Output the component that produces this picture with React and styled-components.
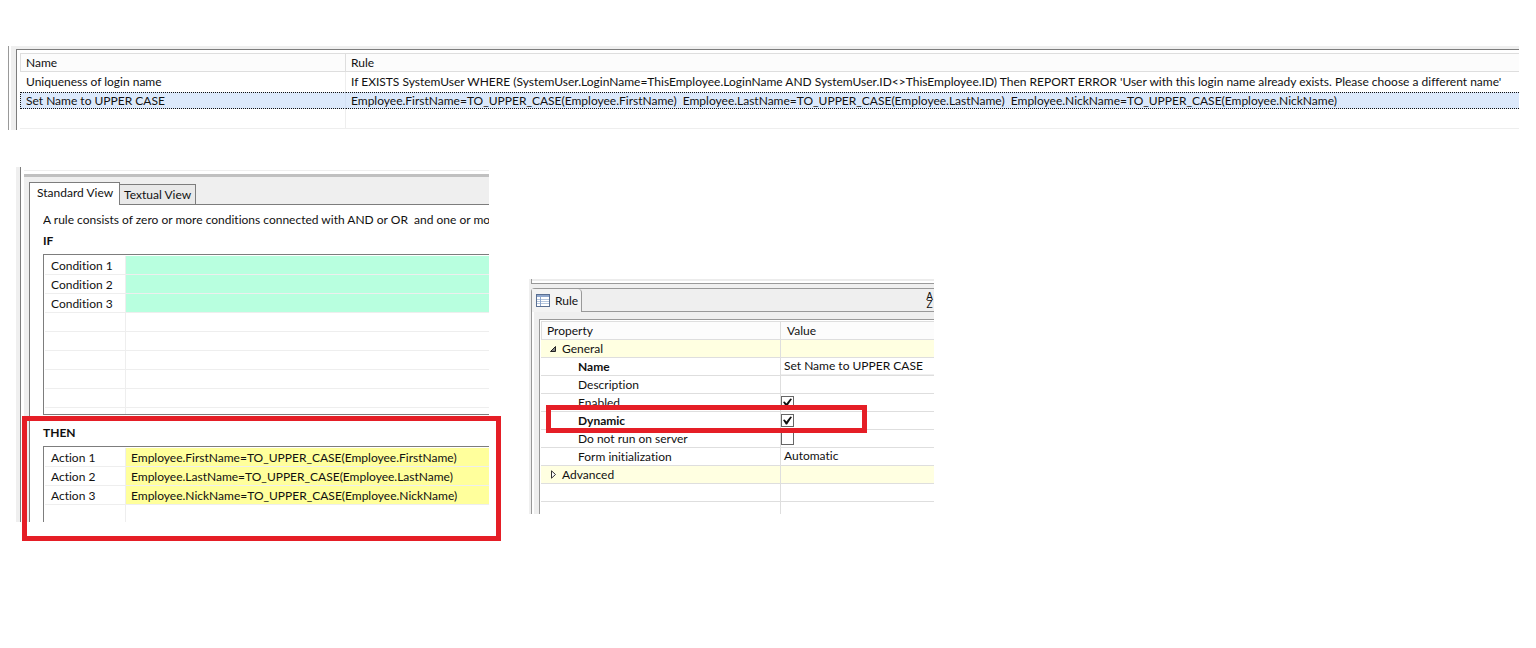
import React, { useState } from 'react';
import styled, { createGlobalStyle } from 'styled-components';

const GlobalStyle = createGlobalStyle`
  * {
    box-sizing: border-box;
  }

  body {
    margin: 0;
    background: #fff;
    color: #111;
    font: 12px/18px Lato, "Open Sans", sans-serif;
    font-variant-ligatures: none;
  }

  button,
  input {
    font: inherit;
    font-variant-ligatures: none;
    color: inherit;
  }
`;

const Page = styled.main`
  min-height: 100vh;
  padding-top: 46px;
`;

const RulesPanel = styled.section`
  margin: 0 17px 0 8px;
  padding-left: 2px;
  border-left: 1px solid #999;
`;

const RulesFrame = styled.div`
  padding: 3px 0 0 5px;
  background: #efefef;
`;

const RulesBody = styled.div`
  padding: 3px 0 1px 3px;
  border-top: 1px solid #7d7d7d;
  border-left: 1px solid #7d7d7d;
  background: #fff;
`;

const Table = styled.table`
  width: 100%;
  table-layout: fixed;
  border-collapse: separate;
  border-spacing: 0;
  text-align: left;

  th,
  td {
    padding: 0;
    overflow: hidden;
    white-space: pre;
    font-weight: 400;
  }
`;

const Col = styled.col`
  width: ${props => props.$width}px;
`;

const RulesTable = styled(Table)`
  thead th {
    height: 19px;
    padding-left: 5px;
    border: 1px solid #dedede;
    border-left-width: 0;
    border-right-width: 1px;
    background: #fcfcfc;
    line-height: 17px;
  }

  thead th:first-child {
    border-left-width: 1px;
  }

  thead th:last-child {
    border-right: 0;
  }
`;

const RuleRow = styled.tr`
  td {
    height: ${props => (props.$selected ? 17 : 20)}px;
    padding-left: 5px;
    line-height: ${props => (props.$selected ? 15 : 18)}px;
    border: 0 solid #eee;
    border-bottom-width: ${props => (props.$empty ? 1 : 0)}px;
    ${props => props.$selected && `
      background: #dce9fb;
      border-top: 1px dotted #111;
      border-bottom: 1px dotted #111;
    `}
  }

  td:first-child {
    padding-left: 6px;
    border-right: 1px solid ${props => (props.$selected ? '#d3e0f3' : '#eee')};
    ${props => props.$selected && `
      padding-left: 5px;
      border-left: 1px dotted #111;
    `}
  }
`;

const Details = styled.div`
  display: grid;
  grid-template-columns: 473fr 405fr 562fr;
  gap: 40px;
  align-items: start;
  margin-top: 37px;
  padding-left: 16px;
`;

const EditorPanel = styled.section`
  min-width: 0;
  padding-left: 4px;
  background: #efefef;
`;

const EditorFrame = styled.div`
  padding-left: 3px;
  border-left: 1px solid #7d7d7d;
  background: #fff;
`;

const Splitter = styled.div`
  height: 10px;
  padding-top: 3px;
  border-bottom: 3px solid #c0c0c0;

  &::before {
    content: "";
    display: block;
    border-top: 1px solid #eee;
  }
`;

const TabFolder = styled.div`
  padding: 5px 0 0 5px;
  background: #efefef;
`;

const TabList = styled.div`
  display: flex;
  align-items: flex-end;
`;

const Tab = styled.button`
  height: ${props => (props.$active ? 23 : 21)}px;
  padding: ${props => (props.$active ? '0 6px 2px 7px' : '0 4px')};
  border: 1px solid #7d7d7d;
  border-width: ${props => (props.$active ? '1px 1px 0 1px' : '1px 1px 1px 0')};
  background: ${props => (props.$active ? '#fff' : '#e9e9e9')};
  line-height: 18px;
  white-space: nowrap;
`;

const TabRest = styled.div`
  flex: 1;
  height: 1px;
  background: #7d7d7d;
`;

const TabPage = styled.div`
  border-left: 1px solid #7d7d7d;
  background: #fff;
`;

const Conditions = styled.section`
  padding: 6px 0 0 13px;
`;

const Intro = styled.p`
  margin: 0 0 3px;
  overflow: hidden;
  white-space: pre;
`;

const Heading = styled.h2`
  margin: 0;
  font-size: 12px;
  line-height: 18px;
`;

const ClauseBox = styled.div`
  margin-top: 4px;
  padding: 1px 0 0 1px;
  border: 1px solid #7d7d7d;
  border-right: 0;
  border-bottom-width: ${props => (props.$open ? 0 : 1)}px;
`;

const ClauseTable = styled(Table)`
  th,
  td {
    height: 19px;
    padding: 2px 0 0 5px;
    border-bottom: 1px solid #eee;
    line-height: 16px;
  }

  th {
    padding-left: 6px;
    border-right: 1px solid #eee;
  }

  tr:last-child th,
  tr:last-child td {
    height: ${props => props.$tail}px;
    border-bottom: 0;
  }
`;

const ClauseCell = styled.td`
  background: ${props => props.$fill};
`;

const Actions = styled.section`
  position: relative;
  padding: 9px 0 0 13px;
`;

const Highlight = styled.span`
  position: absolute;
  inset: ${props => props.$inset};
  z-index: 1;
  border: 5px solid #e51e26;
  pointer-events: none;
`;

const PropertiesPanel = styled.section`
  min-width: 0;
  margin-top: 112px;
  padding-left: 2px;
  background: #efefef;
`;

const PropertiesTop = styled.div`
  height: 5px;
  margin-bottom: 4px;
  border-left: 1px solid #999;
  border-bottom: 1px solid #999;
  background: linear-gradient(#ececec 2px, #fff 2px);
`;

const PropertiesBar = styled.div`
  display: flex;
  height: 24px;
  border: 1px solid #999;
  border-width: 1px 0 0 1px;
  border-top-left-radius: 4px;
`;

const PropertiesTab = styled.button`
  display: flex;
  align-items: center;
  gap: 5px;
  padding: 0 3px 0 4px;
  border: 0;
  border-right: 1px solid #999;
  border-top-right-radius: 4px;
  background: #f3f3f3;
`;

const PropertiesTools = styled.div`
  display: flex;
  flex: 1;
  justify-content: flex-end;
  min-width: 0;
  border-bottom: 1px solid #999;
`;

const SortButton = styled.button`
  display: flex;
  flex-direction: column;
  align-items: center;
  width: 9px;
  padding: 4px 0 0;
  border: 0;
  background: none;
  color: #111;
  font: 10px/8px "Liberation Sans", sans-serif;
`;

const PropertiesBody = styled.div`
  padding: 7px 0 0 5px;
  border-left: 1px solid #999;
  box-shadow: inset 2px 0 #fff;
`;

const Grid = styled.div`
  padding: 1px 0 0 1px;
  margin-left: 2px;
  border: 1px solid #999;
  border-width: 1px 0 0 1px;
  background: #fff;
`;

const PropertyTable = styled(Table)`
  thead th {
    height: 19px;
    padding-left: 6px;
    border: 1px solid #dedede;
    border-left-width: 0;
    border-right-width: 1px;
    background: #fcfcfc;
    line-height: 17px;
  }

  thead th:first-child {
    padding-left: 5px;
    border-left-width: 1px;
  }

  thead th:last-child {
    border-right: 0;
  }
`;

const PropertyRow = styled.tr`
  position: relative;
  background: ${props => (props.$group ? '#ffffe1' : '#fff')};

  th,
  td {
    height: 18px;
    border-bottom: 1px solid #dedede;
    line-height: 17px;
  }

  th {
    padding-left: ${props => (props.$group ? 8 : 37)}px;
    border-right: 1px solid #dedede;
    font-weight: ${props => (props.$bold ? 700 : 400)};
  }
`;

const TailRow = styled(PropertyRow)`
  th,
  td {
    height: 12px;
    border-bottom: 0;
  }
`;

const GroupToggle = styled.button`
  display: flex;
  align-items: center;
  gap: 5px;
  height: 17px;
  padding: 0;
  border: 0;
  background: none;
`;

const ValueText = styled.span`
  display: block;
  height: 17px;
  padding-left: 3px;
  line-height: 16px;
`;

const ValueInput = styled.input`
  display: block;
  width: 100%;
  height: 17px;
  padding: 0 0 2px 3px;
  border: 0;
  border-bottom: 1px solid #efefef;
  outline: 0;
  background: #fff;
`;

const CheckBox = styled.input`
  appearance: none;
  display: block;
  width: 13px;
  height: 13px;
  margin: 0;
  border: 1px solid #666;
  background: #fff;

  &:checked::before {
    content: "";
    display: block;
    width: 9px;
    height: 9px;
    margin: 1px;
    background: #111;
    clip-path: polygon(0 45%, 18% 38%, 38% 62%, 82% 5%, 100% 12%, 45% 95%, 32% 95%);
  }
`;

const rules = [
  {
    name: 'Uniqueness of login name',
    rule: "If EXISTS SystemUser WHERE (SystemUser.LoginName=ThisEmployee.LoginName AND SystemUser.ID<>ThisEmployee.ID) Then REPORT ERROR 'User with this login name already exists. Please choose a different name'",
  },
  {
    name: 'Set Name to UPPER CASE',
    rule: 'Employee.FirstName=TO_UPPER_CASE(Employee.FirstName)  Employee.LastName=TO_UPPER_CASE(Employee.LastName)  Employee.NickName=TO_UPPER_CASE(Employee.NickName)',
    selected: true,
  },
];

const conditions = [
  { label: 'Condition 1', fill: '#b8ffdf' },
  { label: 'Condition 2', fill: '#b8ffdf' },
  { label: 'Condition 3', fill: '#b8ffdf' },
  {}, {}, {}, {}, {}, {},
];

const actions = [
  { label: 'Action 1', text: 'Employee.FirstName=TO_UPPER_CASE(Employee.FirstName)', fill: '#ffff9c' },
  { label: 'Action 2', text: 'Employee.LastName=TO_UPPER_CASE(Employee.LastName)', fill: '#ffff9c' },
  { label: 'Action 3', text: 'Employee.NickName=TO_UPPER_CASE(Employee.NickName)', fill: '#ffff9c' },
  {},
];

const TableIcon = () => (
  <svg width="14" height="13" viewBox="0 0 14 13" shapeRendering="crispEdges" aria-hidden="true">
    <rect width="14" height="13" fill="#5a6f92" />
    <rect x="1" y="1" width="12" height="2" fill="#8ea6cc" />
    <rect x="1" y="3" width="12" height="9" fill="#fff" />
    <path d="M1 5.5h12M1 7.5h12M1 9.5h12" stroke="#b5c6de" />
    <path d="M4.5 3v9" stroke="#8ea6cc" />
  </svg>
);

const Arrow = ({ open }) => (
  <svg width="8" height="9" viewBox="0 0 8 9" aria-hidden="true">
    {open
      ? <path d="M6.5 2.5v5h-5z" fill="#888" stroke="#222" />
      : <path d="M2.5 .8v7.4l4-3.7z" fill="#fff" stroke="#333" />}
  </svg>
);

const Rules = () => (
  <RulesPanel>
    <RulesFrame>
      <RulesBody>
        <RulesTable>
          <colgroup>
            <Col $width={326} />
            <col />
          </colgroup>
          <thead>
            <tr>
              <th>Name</th>
              <th>Rule</th>
            </tr>
          </thead>
          <tbody>
            {rules.map(({ name, rule, selected }) => (
              <RuleRow key={name} $selected={selected}>
                <td>{name}</td>
                <td>{rule}</td>
              </RuleRow>
            ))}
            <RuleRow $empty>
              <td />
              <td />
            </RuleRow>
          </tbody>
        </RulesTable>
      </RulesBody>
    </RulesFrame>
  </RulesPanel>
);

const Clauses = ({ rows, tail }) => (
  <ClauseTable $tail={tail}>
    <colgroup>
      <Col $width={81} />
      <col />
    </colgroup>
    <tbody>
      {rows.map(({ label, text, fill }, index) => (
        <tr key={index}>
          <th scope="row">{label}</th>
          <ClauseCell $fill={fill}>{text}</ClauseCell>
        </tr>
      ))}
    </tbody>
  </ClauseTable>
);

const RuleEditor = () => (
  <EditorPanel>
    <EditorFrame>
      <Splitter />
      <TabFolder>
        <TabList role="tablist">
          <Tab role="tab" aria-selected="true" $active>Standard View</Tab>
          <Tab role="tab" aria-selected="false">Textual View</Tab>
          <TabRest />
        </TabList>
        <TabPage>
          <Conditions>
            <Intro>A rule consists of zero or more conditions connected with AND or OR  and one or mo</Intro>
            <Heading>IF</Heading>
            <ClauseBox>
              <Clauses rows={conditions} tail={6} />
            </ClauseBox>
          </Conditions>
          <Actions>
            <Heading>THEN</Heading>
            <ClauseBox $open>
              <Clauses rows={actions} tail={17} />
            </ClauseBox>
            <Highlight $inset="1px -12px -19px -8px" />
          </Actions>
        </TabPage>
      </TabFolder>
    </EditorFrame>
  </EditorPanel>
);

const Properties = () => {
  const [name, setName] = useState('Set Name to UPPER CASE');
  const [flags, setFlags] = useState({ enabled: true, dynamic: true, server: false });

  const renderFlag = (id) => (
    <CheckBox
      id={id}
      type="checkbox"
      checked={flags[id]}
      onChange={() => setFlags({ ...flags, [id]: !flags[id] })}
    />
  );

  return (
    <PropertiesPanel>
      <PropertiesTop />
      <PropertiesBar>
        <PropertiesTab>
          <TableIcon />
          Rule
        </PropertiesTab>
        <PropertiesTools>
          <SortButton aria-label="Sort">
            <span>A</span>
            <span>Z</span>
          </SortButton>
        </PropertiesTools>
      </PropertiesBar>
      <PropertiesBody>
        <Grid>
          <PropertyTable>
            <colgroup>
              <Col $width={240} />
              <col />
            </colgroup>
            <thead>
              <tr>
                <th>Property</th>
                <th>Value</th>
              </tr>
            </thead>
            <tbody>
              <PropertyRow $group>
                <th><GroupToggle><Arrow open />General</GroupToggle></th>
                <td />
              </PropertyRow>
              <PropertyRow $bold>
                <th><label htmlFor="name">Name</label></th>
                <td>
                  <ValueInput id="name" value={name} onChange={(event) => setName(event.target.value)} />
                </td>
              </PropertyRow>
              <PropertyRow>
                <th>Description</th>
                <td />
              </PropertyRow>
              <PropertyRow>
                <th><label htmlFor="enabled">Enabled</label></th>
                <td>{renderFlag('enabled')}</td>
              </PropertyRow>
              <PropertyRow $bold>
                <th>
                  <label htmlFor="dynamic">Dynamic</label>
                  <Highlight $inset="-7px 67px -3px 5px" />
                </th>
                <td>{renderFlag('dynamic')}</td>
              </PropertyRow>
              <PropertyRow>
                <th><label htmlFor="server">Do not run on server</label></th>
                <td>{renderFlag('server')}</td>
              </PropertyRow>
              <PropertyRow>
                <th>Form initialization</th>
                <td><ValueText>Automatic</ValueText></td>
              </PropertyRow>
              <PropertyRow $group>
                <th><GroupToggle><Arrow />Advanced</GroupToggle></th>
                <td />
              </PropertyRow>
              <PropertyRow>
                <th />
                <td />
              </PropertyRow>
              <TailRow>
                <th />
                <td />
              </TailRow>
            </tbody>
          </PropertyTable>
        </Grid>
      </PropertiesBody>
    </PropertiesPanel>
  );
};

const App = () => (
  <Page>
    <GlobalStyle />
    <Rules />
    <Details>
      <RuleEditor />
      <Properties />
    </Details>
  </Page>
);

export default App;
